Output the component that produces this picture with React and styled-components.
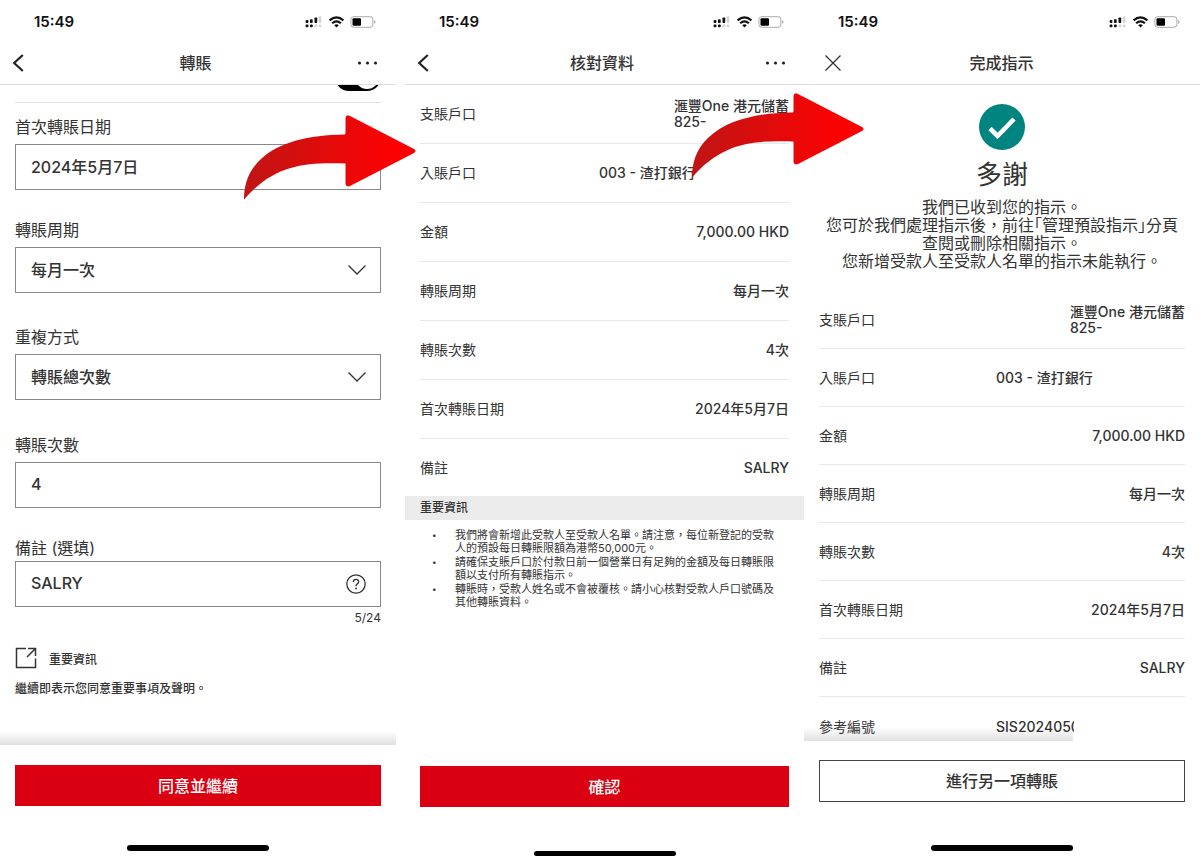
import React from "react";
import styled, { createGlobalStyle } from "styled-components";

const GlobalStyle = createGlobalStyle`
  *, *::before, *::after { box-sizing: border-box; }
  body {
    margin: 0;
    background: #fff;
    color: #333;
    font-family: Inter, "Noto Sans CJK TC", sans-serif;
    font-size: 14px;
  }
  h1, h2, p, ul, dl, dd { margin: 0; padding: 0; }
  button, input, select { font: inherit; color: inherit; }
`;

const Page = styled.div`
  display: flex;
  min-height: 100vh;
  overflow: hidden;
`;

const Phone = styled.section`
  position: relative;
  display: flex;
  flex-direction: column;
  flex: ${(p) => p.$grow || 396} 1 0;
  min-width: 0;
  margin-right: ${(p) => p.$gap || 0}px;
`;

const StatusBar = styled.div`
  display: flex;
  align-items: center;
  justify-content: space-between;
  height: 43px;
  padding: 0 20px 0 34px;
  color: #111;
  font-size: 15px;
  font-weight: 600;
`;

const NavBar = styled.header`
  display: grid;
  grid-template-columns: 1fr auto 1fr;
  align-items: center;
  height: 42px;
  padding: ${(p) => (p.$dialog ? "0 22px 1px 21px" : "0 17px 1px 12px")};
  border-bottom: 1px solid #ddd;
`;

const NavTitle = styled.h1`
  font-size: 16px;
  font-weight: 500;
  line-height: 20px;
`;

const IconButton = styled.button`
  display: flex;
  padding: 0;
  border: 0;
  background: none;
  justify-self: ${(p) => p.$side || "start"};
`;

const Content = styled.main`
  flex: 1 0 auto;
`;

const Form = styled(Content)`
  padding: 0 15px;
`;

const ToggleStrip = styled.div`
  display: flex;
  justify-content: flex-end;
  align-items: flex-end;
  height: 6px;
  overflow: hidden;
`;

const Toggle = styled.input`
  appearance: none;
  display: flex;
  flex-shrink: 0;
  justify-content: flex-end;
  width: 46px;
  height: 28px;
  margin: 0;
  padding: 2px;
  border-radius: 14px;
  background: #000;

  &::after {
    content: "";
    width: 24px;
    height: 24px;
    border-radius: 50%;
    background: #fff;
  }
`;

const Divider = styled.hr`
  height: 1px;
  margin: 11px 0 14px;
  border: 0;
  background: #ddd;
`;

const Field = styled.div`
  display: grid;
  gap: ${(p) => (p.$tight ? 3 : 7)}px;
  margin-bottom: ${(p) => p.$after || 0}px;
`;

const FieldLabel = styled.label`
  font-size: 16px;
  line-height: 20px;
`;

const Control = styled.div`
  display: grid;
  align-items: center;

  > * { grid-area: 1 / 1; }
`;

const TextInput = styled.input`
  width: 100%;
  height: 46px;
  padding: 0 15px 2px;
  border: 1px solid #888;
  border-radius: 0;
  background: #fff;
  font-size: 16px;
  font-weight: 500;
  outline: 0;
`;

const Select = styled.select`
  appearance: none;
  width: 100%;
  height: 46px;
  padding: 0 15px;
  border: 1px solid #888;
  border-radius: 0;
  background: #fff;
  font-size: 16px;
  font-weight: 500;
`;

const Adornment = styled.span`
  display: flex;
  justify-self: end;
  margin-right: 15px;
  pointer-events: none;
`;

const Counter = styled.p`
  padding-top: 3px;
  font-size: 12px;
  line-height: 16px;
  text-align: right;
`;

const InfoLink = styled.a`
  display: flex;
  align-items: center;
  gap: 12px;
  margin-top: 21px;
  color: inherit;
  font-size: 12px;
  font-weight: 500;
  text-decoration: none;
`;

const Statement = styled.p`
  margin-top: 12px;
  font-size: 12px;
  font-weight: 500;
  line-height: 16px;
`;

const Rows = styled.dl`
  padding: 0 15px;
`;

const Row = styled.div`
  display: flex;
  align-items: ${(p) => (p.$cut ? "flex-end" : "center")};
  justify-content: space-between;
  height: ${(p) => p.$height}px;
  padding-bottom: ${(p) => (p.$cut ? 4 : 0)}px;
  border-bottom: 1px solid #e8e8e8;

  &:last-child { border-bottom: 0; }
`;

const Term = styled.dt`
  line-height: 20px;
`;

const Value = styled.dd`
  width: ${(p) => (p.$width ? p.$width + "px" : "auto")};
  font-weight: 500;
  line-height: 16px;
`;

const Clip = styled.span`
  display: block;
  width: 78px;
  overflow: hidden;
  line-height: 20px;
`;

const SectionTitle = styled.h2`
  padding: 0 15px;
  background: #ebebeb;
  font-size: 12px;
  font-weight: 500;
  line-height: 24px;
`;

const Notes = styled.ul`
  padding: 9px 14px 0 27px;
  list-style: none;
  font-size: 11px;
  line-height: 13px;
`;

const Note = styled.li`
  display: flex;

  &::before {
    content: "•";
    flex: 0 0 23px;
    font-size: 8px;
  }
`;

const NoteText = styled.p`
  padding-bottom: 1px;
`;

const Result = styled.div`
  display: flex;
  flex-direction: column;
  align-items: center;
  padding: 19px 0 21px;
  text-align: center;
`;

const Thanks = styled.h2`
  margin: 9px 0 7px;
  font-size: 26px;
  font-weight: 400;
  line-height: 32px;
`;

const Message = styled.p`
  font-size: 16px;
  line-height: 18px;
  white-space: nowrap;
`;

const Quote = styled.span`
  font-feature-settings: "halt";
`;

const Footer = styled.footer`
  position: relative;
  display: flex;
  flex-direction: column;
  align-items: center;
  padding: ${(p) => p.$padding};
  background: #fff;
`;

const Shade = styled.div`
  position: absolute;
  bottom: 100%;
  left: 0;
  width: ${(p) => p.$width || "100%"};
  height: 14px;
  background: linear-gradient(rgba(0, 0, 0, 0), rgba(0, 0, 0, 0.12));
`;

const ActionButton = styled.button`
  width: 100%;
  height: ${(p) => (p.$outline ? 42 : 41)}px;
  padding: 0 0 2px;
  border: ${(p) => (p.$outline ? "1px solid #444" : "0")};
  background: ${(p) => (p.$outline ? "#fff" : "#db0011")};
  color: ${(p) => (p.$outline ? "#333" : "#fff")};
  font-size: 16px;
  font-weight: 500;
`;

const HomeBar = styled.div`
  width: 142px;
  height: ${(p) => p.$thickness || 6}px;
  margin-top: ${(p) => p.$above}px;
  border-radius: 3px;
  background: #000;
`;

const ArrowSvg = styled.svg`
  position: absolute;
  z-index: 2;
  top: ${(p) => p.$top}px;
  right: ${(p) => p.$right}px;
`;

function Arrow({ id, top, right }) {
  return (
    <ArrowSvg $top={top} $right={right} width="172" height="85" viewBox="0 0 172 85" aria-hidden="true">
      <defs>
        <linearGradient id={id} x1="0" x2="1" y1="0" y2="0">
          <stop offset="0" stopColor="#c01515" />
          <stop offset="0.85" stopColor="#fb0202" />
          <stop offset="1" stopColor="#ff0000" />
        </linearGradient>
      </defs>
      <path
        fill={`url(#${id})`}
        d="M101.500 3Q102 -1 106 1L170 34Q173 36 170 38L106 71Q102 72.500 101.500 69V48.500C60 47 30 50 0 84.500C0 70 4 56 17 44C35 27 65 20 100 19.500Q101.500 19.500 101.500 18Z"
      />
    </ArrowSvg>
  );
}

function Status() {
  return (
    <StatusBar>
      <span>15:49</span>
      <svg width="71" height="12" viewBox="0 0 71 12" aria-hidden="true">
        <g fill="#111">
          <rect x="0.700" y="4" width="2.700" height="3" rx="0.700" />
          <rect x="5" y="3.200" width="2.700" height="3.800" rx="0.700" />
          <rect x="9.500" y="1.600" width="2.700" height="5.400" rx="0.700" />
          <rect x="0.700" y="8.600" width="2.700" height="2.700" rx="0.700" />
          <rect x="5" y="8.600" width="2.700" height="2.700" rx="0.700" />
        </g>
        <g fill="#d4d4d4">
          <rect x="13.800" y="0.300" width="2.500" height="6.700" rx="0.700" />
          <rect x="9.500" y="8.600" width="2.700" height="2.700" rx="0.700" />
          <rect x="13.800" y="8.600" width="2.500" height="2.700" rx="0.700" />
        </g>
        <g fill="none" stroke="#111" strokeWidth="2.100">
          <path d="M24.600 4.400Q31.500 -1.800 38.400 4.400" />
          <path d="M27.100 7.200Q31.500 3.400 35.900 7.200" />
        </g>
        <path fill="#111" d="M29.200 9.200Q31.500 7.300 33.800 9.200L31.500 11.600Z" />
        <rect x="45.900" y="0.700" width="22" height="10.600" rx="2.800" fill="none" stroke="#aaa" />
        <rect x="47.500" y="2.300" width="8.500" height="7.400" rx="1.200" fill="#000" />
        <path d="M69.200 4Q70.600 4.800 70.600 6T69.200 8Z" fill="#aaa" />
      </svg>
    </StatusBar>
  );
}

function BackButton() {
  return (
    <IconButton type="button" aria-label="返回">
      <svg width="12" height="18" viewBox="0 0 12 18" fill="none" stroke="#222" strokeWidth="2.200">
        <path d="M10.800 1L2.200 9L10.800 17" />
      </svg>
    </IconButton>
  );
}

function MoreButton() {
  return (
    <IconButton type="button" aria-label="更多" $side="end">
      <svg width="22" height="4" viewBox="0 0 22 4" fill="#222">
        <circle cx="2.500" cy="2" r="1.600" />
        <circle cx="10.500" cy="2" r="1.600" />
        <circle cx="18.500" cy="2" r="1.600" />
      </svg>
    </IconButton>
  );
}

function Chevron() {
  return (
    <Adornment>
      <svg width="18" height="10" viewBox="0 0 18 10" fill="none" stroke="#333" strokeWidth="1.300">
        <path d="M0.500 0.500L9 9L17.500 0.500" />
      </svg>
    </Adornment>
  );
}

function SelectField({ id, label, option, after }) {
  return (
    <Field $after={after}>
      <FieldLabel htmlFor={id}>{label}</FieldLabel>
      <Control>
        <Select id={id} defaultValue={option}>
          <option>{option}</option>
        </Select>
        <Chevron />
      </Control>
    </Field>
  );
}

function Details({ height, lastHeight, maskWidth, reference }) {
  const rows = [
    ["金額", "7,000.00 HKD"],
    ["轉賬周期", "每月一次"],
    ["轉賬次數", "4次"],
    ["首次轉賬日期", "2024年5月7日"],
  ];
  return (
    <Rows>
      <Row $height={height}>
        <Term>支賬戶口</Term>
        <Value>
          滙豐One 港元儲蓄
          <br />
          825-
        </Value>
      </Row>
      <Row $height={height}>
        <Term>入賬戶口</Term>
        <Value $width={maskWidth}>003 - 渣打銀行</Value>
      </Row>
      {rows.map(([term, value]) => (
        <Row key={term} $height={height}>
          <Term>{term}</Term>
          <Value>{value}</Value>
        </Row>
      ))}
      <Row $height={lastHeight}>
        <Term>備註</Term>
        <Value>SALRY</Value>
      </Row>
      {reference && (
        <Row $height={44} $cut>
          <Term>參考編號</Term>
          <Value $width={maskWidth}>
            <Clip>{reference}</Clip>
          </Value>
        </Row>
      )}
    </Rows>
  );
}

export default function App() {
  return (
    <>
      <GlobalStyle />
      <Page lang="zh-Hant">
        <Phone $gap={9}>
          <Status />
          <NavBar>
            <BackButton />
            <NavTitle>轉賬</NavTitle>
            <MoreButton />
          </NavBar>
          <Form>
            <ToggleStrip>
              <Toggle type="checkbox" defaultChecked aria-label="定期轉賬" />
            </ToggleStrip>
            <Divider />
            <Field $after={30}>
              <FieldLabel htmlFor="date">首次轉賬日期</FieldLabel>
              <TextInput id="date" defaultValue="2024年5月7日" />
            </Field>
            <SelectField id="cycle" label="轉賬周期" option="每月一次" after={34} />
            <SelectField id="repeat" label="重複方式" option="轉賬總次數" after={35} />
            <Field $after={30}>
              <FieldLabel htmlFor="times">轉賬次數</FieldLabel>
              <TextInput id="times" defaultValue="4" />
            </Field>
            <Field $tight>
              <FieldLabel htmlFor="note">備註 (選填)</FieldLabel>
              <Control>
                <TextInput id="note" defaultValue="SALRY" />
                <Adornment>
                  <svg width="20" height="20" viewBox="0 0 20 20" fill="none" stroke="#333" strokeWidth="1.300">
                    <circle cx="10" cy="10" r="9.200" />
                    <path d="M7.300 7.900Q7.300 5.300 10 5.300T12.700 7.700Q12.700 8.900 11.300 9.900Q10 10.800 10 12.300" />
                    <circle cx="10" cy="14.500" r="0.900" fill="#333" stroke="none" />
                  </svg>
                </Adornment>
              </Control>
            </Field>
            <Counter>5/24</Counter>
            <InfoLink href="#info">
              <svg width="22" height="22" viewBox="0 0 22 22" fill="none" stroke="#333" strokeWidth="1.500">
                <path d="M11 1.500H1.500V20.500H20.500V11.500" />
                <path d="M13 1.500H20.500V9M20.500 1.500L12 10" />
              </svg>
              重要資訊
            </InfoLink>
            <Statement>繼續即表示您同意重要事項及聲明。</Statement>
          </Form>
          <Footer $padding="20px 15px 7px">
            <Shade />
            <ActionButton type="button">同意並繼續</ActionButton>
            <HomeBar $above={39} />
          </Footer>
          <Arrow id="arrow-one" top={115} right={-20} />
        </Phone>

        <Phone $grow={399}>
          <Status />
          <NavBar>
            <BackButton />
            <NavTitle>核對資料</NavTitle>
            <MoreButton />
          </NavBar>
          <Content>
            <Details height={59} lastHeight={57} maskWidth={190} />
            <SectionTitle>重要資訊</SectionTitle>
            <Notes>
              <Note>
                <NoteText>
                  我們將會新增此受款人至受款人名單。請注意，每位新登記的受款
                  <br />
                  人的預設每日轉賬限額為港幣50,000元。
                </NoteText>
              </Note>
              <Note>
                <NoteText>
                  請確保支賬戶口於付款日前一個營業日有足夠的金額及每日轉賬限
                  <br />
                  額以支付所有轉賬指示。
                </NoteText>
              </Note>
              <Note>
                <NoteText>
                  轉賬時，受款人姓名或不會被覆核。請小心核對受款人戶口號碼及
                  <br />
                  其他轉賬資料。
                </NoteText>
              </Note>
            </Notes>
          </Content>
          <Footer $padding="0 15px 2px">
            <ActionButton type="button">確認</ActionButton>
            <HomeBar $above={44} $thickness={5} />
          </Footer>
          <Arrow id="arrow-two" top={93} right={-60} />
        </Phone>

        <Phone>
          <Status />
          <NavBar $dialog>
            <IconButton type="button" aria-label="關閉">
              <svg width="16" height="16" viewBox="0 0 16 16" fill="none" stroke="#333" strokeWidth="1.300">
                <path d="M0.500 0.500L15.500 15.500M15.500 0.500L0.500 15.500" />
              </svg>
            </IconButton>
            <NavTitle>完成指示</NavTitle>
          </NavBar>
          <Content>
            <Result>
              <svg width="46" height="46" viewBox="0 0 46 46" aria-hidden="true">
                <circle cx="23" cy="23" r="23" fill="#00847f" />
                <path d="M11 24.500L18.500 32L35 15" fill="none" stroke="#fff" strokeWidth="4.600" />
              </svg>
              <Thanks>多謝</Thanks>
              <Message>
                我們已收到您的指示。
                <br />
                您可於我們處理指示後，前往<Quote>「</Quote>管理預設指示<Quote>」</Quote>分頁
                <br />
                查閱或刪除相關指示。
                <br />
                您新增受款人至受款人名單的指示未能執行。
              </Message>
            </Result>
            <Details height={58} lastHeight={58} maskWidth={189} reference="SIS2024050" />
          </Content>
          <Footer $padding="19px 15px 7px">
            <Shade $width="68%" />
            <ActionButton type="button" $outline>
              進行另一項轉賬
            </ActionButton>
            <HomeBar $above={43} />
          </Footer>
        </Phone>
      </Page>
    </>
  );
}
